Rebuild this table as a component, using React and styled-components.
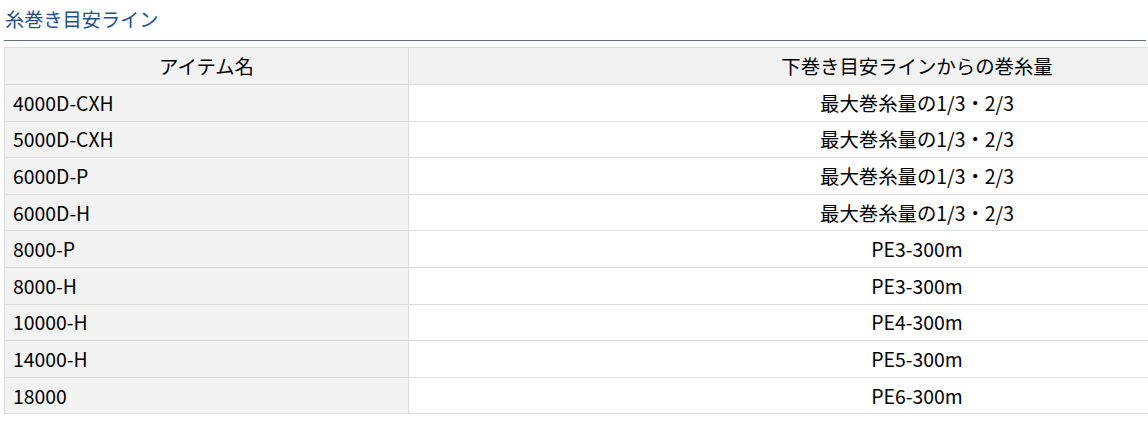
import React from "react";
import styled, { createGlobalStyle } from "styled-components";

const GlobalStyle = createGlobalStyle`
    body {
        margin: 0;
        background: #fff;
        font-family: "Noto Sans CJK JP", "Noto Sans", sans-serif;
        color: #000;
        overflow: hidden;
    }
`;

const Section = styled.section`
    padding: 4px 2px 0 4px;
`;

const Title = styled.h2`
    margin: 0;
    padding: 0 0 6px 1px;
    font-size: 19.2px;
    font-weight: 400;
    line-height: 30px;
    color: #1d4f91;
    border-bottom: 1px solid #5d6d82;
`;

const Table = styled.table`
    width: 1422px;
    margin-top: 6px;
    border-collapse: collapse;
    font-size: 19.4px;
    line-height: 24px;
`;

const Cell = styled.td`
    border: 1px solid #dcdcdc;
    height: 36.6px;
    padding: 0 8px;
    box-sizing: border-box;
    background: ${props => (props.$shaded ? "#f2f2f2" : "#fff")};
    text-align: ${props => (props.$center ? "center" : "left")};
    width: ${props => props.$width || "auto"};
`;

const HeadCell = styled(Cell).attrs({ as: "th" })`
    height: 37px;
    font-weight: 400;
    text-align: center;
    background: #f2f2f2;
`;

const rows = [
    ["4000D-CXH", "最大巻糸量の1/3・2/3"],
    ["5000D-CXH", "最大巻糸量の1/3・2/3"],
    ["6000D-P", "最大巻糸量の1/3・2/3"],
    ["6000D-H", "最大巻糸量の1/3・2/3"],
    ["8000-P", "PE3-300m"],
    ["8000-H", "PE3-300m"],
    ["10000-H", "PE4-300m"],
    ["14000-H", "PE5-300m"],
    ["18000", "PE6-300m"],
];

const App = () => {
    return (
        <Section>
            <GlobalStyle/>
            <Title>糸巻き目安ライン</Title>
            <Table>
                <thead>
                    <tr>
                        <HeadCell $width="404px">アイテム名</HeadCell>
                        <HeadCell>下巻き目安ラインからの巻糸量</HeadCell>
                    </tr>
                </thead>
                <tbody>
                    {rows.map(([item, amount]) => (
                        <tr key={item}>
                            <Cell $shaded>{item}</Cell>
                            <Cell $center>{amount}</Cell>
                        </tr>
                    ))}
                </tbody>
            </Table>
        </Section>
    )
};

export default App
